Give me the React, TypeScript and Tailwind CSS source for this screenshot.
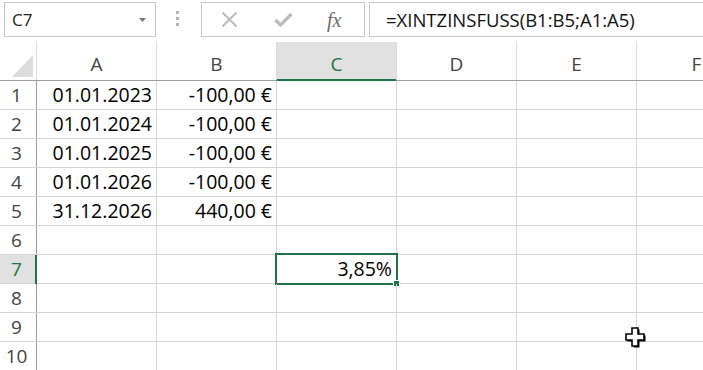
import React from 'react';

const font = "font-['Open_Sans','Liberation_Sans',sans-serif]";

const cols = ['A', 'B', 'C', 'D', 'E', 'F'];

const data: Record<number, string[]> = {
  1: ['01.01.2023', '-100,00 €'],
  2: ['01.01.2024', '-100,00 €'],
  3: ['01.01.2025', '-100,00 €'],
  4: ['01.01.2026', '-100,00 €'],
  5: ['31.12.2026', '440,00 €'],
};

/** Name box, separator dots and formula bar. */
function FormulaBar() {
  return (
    <div className="flex h-[42px] items-start pt-[2px] bg-white">
      <div className="ml-[4px] flex h-[35px] w-[152px] items-center justify-between border border-[#c6c6c6] pl-[7px] pr-[9px]">
        <span className="text-[17px] text-[#222]">C7</span>
        <svg width="7" height="4" viewBox="0 0 7 4">
          <path d="M0 0h7L3.5 4z" fill="#7a7a7a" />
        </svg>
      </div>
      <div className="ml-[20px] mt-[9px] flex flex-col gap-[3px]">
        <span className="h-[3px] w-[3px] bg-[#b4b4b4]" />
        <span className="h-[3px] w-[3px] bg-[#b4b4b4]" />
        <span className="h-[3px] w-[3px] bg-[#b4b4b4]" />
      </div>
      <div className="ml-[22px] flex h-[35px] w-[164px] items-center border border-[#c6c6c6]">
        <svg className="ml-[19px]" width="17" height="17" viewBox="0 0 17 17">
          <path d="M1.5 1.5l14 14M15.5 1.5l-14 14" stroke="#bcbcbc" strokeWidth="2" />
        </svg>
        <svg className="ml-[36px]" width="19" height="15" viewBox="0 0 19 15">
          <path d="M1.5 8l5 5L17.5 2" stroke="#bcbcbc" strokeWidth="3.2" fill="none" />
        </svg>
        <span className="ml-[34px] font-['Liberation_Serif',serif] text-[20px] italic leading-none text-[#6a6a6a]">
          fx
        </span>
      </div>
      <div className="ml-[4px] flex h-[35px] flex-1 items-center border border-r-0 border-[#c6c6c6] pl-[16px]">
        <span className="text-[18.5px] text-[#111]">=XINTZINSFUSS(B1:B5;A1:A5)</span>
      </div>
    </div>
  );
}

function HeaderRow() {
  return (
    <div className="flex h-[39px] border-b border-[#9c9c9c]">
      <div className="flex w-[37px] shrink-0 items-end justify-end border-r border-[#dadada] pb-[3px] pr-[3px]">
        <svg width="21" height="22" viewBox="0 0 21 22">
          <path d="M21 0V22H0z" fill="#dcdcdc" />
        </svg>
      </div>
      {cols.map((c) => {
        const sel = c === 'C';
        return (
          <div
            key={c}
            className={
              sel
                ? 'relative flex w-[120px] shrink-0 items-end justify-center border-r border-[#dadada] bg-[#e1e1e1] pb-[2px] text-[19px] text-[#217346]'
                : 'flex w-[120px] shrink-0 items-end justify-center border-r border-[#dadada] pb-[2px] text-[19px] text-[#444]'
            }
          >
            {c}
            {sel && <span className="absolute bottom-[-1px] left-0 right-0 h-[2px] bg-[#217346]" />}
          </div>
        );
      })}
    </div>
  );
}

function Row({ n }: { n: number }) {
  const vals = data[n] || [];
  const sel = n === 7;
  return (
    <div className="flex h-[29px] border-b border-[#d4d4d4]">
      <div
        className={
          sel
            ? 'relative flex w-[37px] shrink-0 items-center justify-center border-r border-[#9c9c9c] bg-[#e1e1e1] pr-[3px] text-[19px] text-[#217346]'
            : 'flex w-[37px] shrink-0 items-center justify-center border-r border-[#9c9c9c] pr-[3px] text-[19px] text-[#444]'
        }
      >
        {n}
        {sel && <span className="absolute bottom-[-1px] right-[-1px] top-0 w-[2px] bg-[#217346]" />}
      </div>
      {cols.map((c, i) => (
        <div
          key={c}
          className="relative flex w-[120px] shrink-0 items-center justify-end border-r border-[#d4d4d4] pr-[4px] text-[19.5px] text-black"
        >
          {vals[i] ?? ''}
          {sel && c === 'C' && (
            <>
              {'3,85%'}
              <span className="absolute bottom-[-2px] left-[-2px] right-[-2px] top-[-2px] border-2 border-[#217346]" />
              <span className="absolute bottom-[-4px] right-[-4px] h-[7px] w-[7px] border border-white bg-[#217346]" />
            </>
          )}
        </div>
      ))}
    </div>
  );
}

export default function App() {
  return (
    <div className={`relative h-[370px] w-[703px] overflow-hidden bg-white ${font}`}>
      <FormulaBar />
      <HeaderRow />
      {Array.from({ length: 10 }).map((_, i) => (
        <Row key={i} n={i + 1} />
      ))}
      <svg className="absolute left-[625px] top-[327px]" width="23" height="23" viewBox="0 0 23 23">
        <path d="M7 1h6v6h6v6h-6v6h-6v-6h-6v-6h6z" fill="#000" transform="translate(1.5 1.5)" />
        <path d="M7 1h6v6h6v6h-6v6h-6v-6h-6v-6h6z" fill="#fff" stroke="#000" strokeWidth="1.6" />
      </svg>
    </div>
  );
}
